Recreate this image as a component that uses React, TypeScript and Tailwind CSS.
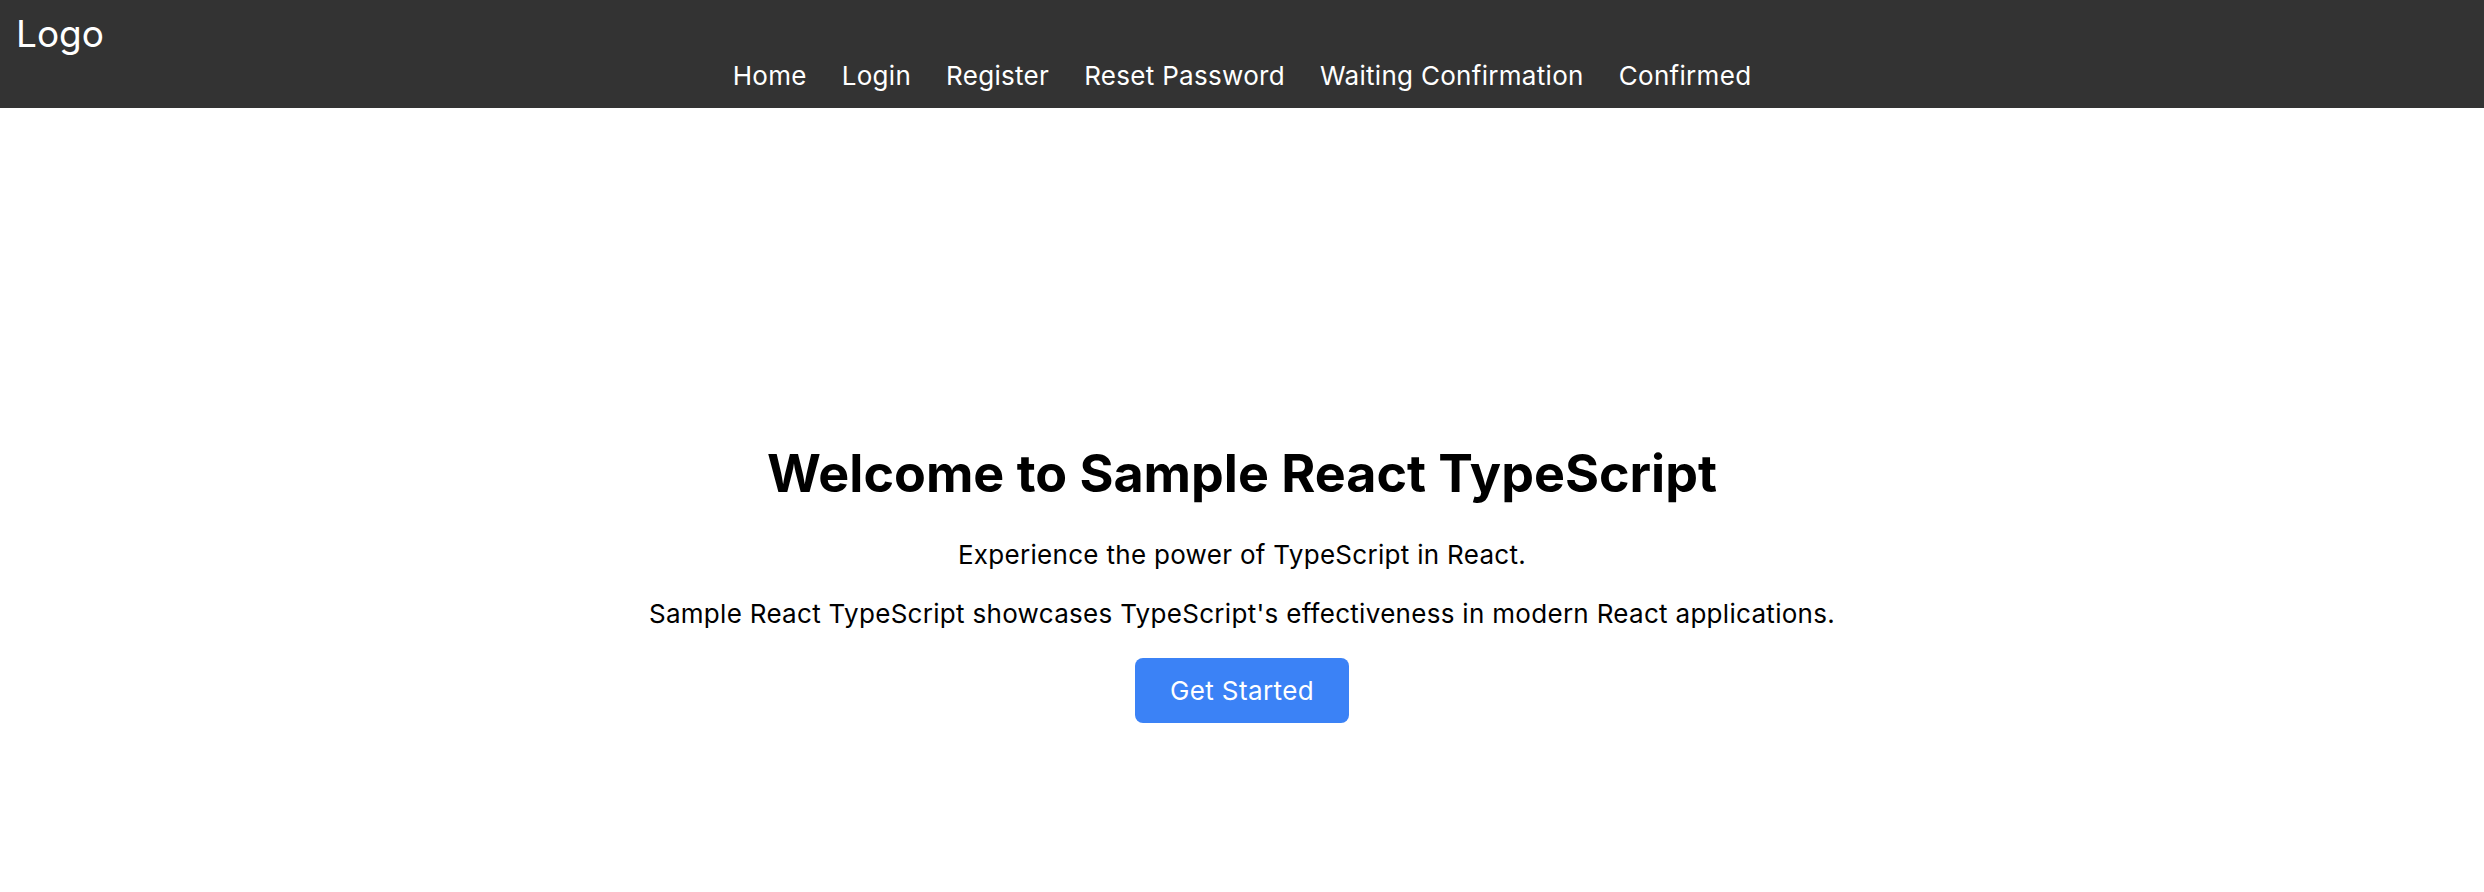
import React from "react";

const links = ["Home", "Login", "Register", "Reset Password", "Waiting Confirmation", "Confirmed"];

function Header() {
  return (
    <header className="bg-[#333333] text-white h-[108px] flex flex-col">
      <div className="px-[16px] pt-[10px] text-[37px] leading-[48px]">Logo</div>
      <nav className="flex justify-center gap-[35px] text-[26px] leading-[36px] tracking-[0.3px]">
        {links.map((l) => (
          <a key={l} href="#" className="text-white">
            {l}
          </a>
        ))}
      </nav>
    </header>
  );
}

export default function App() {
  return (
    <div className="min-h-screen bg-white font-['Inter','Liberation_Sans',sans-serif]">
      <Header />
      <main className="flex flex-col items-center text-center text-black pt-[335px]">
        <h1 className="text-[52px] leading-[61px] font-bold">Welcome to Sample React TypeScript</h1>
        <p className="mt-[32px] text-[26px] leading-[38px] tracking-[0.3px]">Experience the power of TypeScript in React.</p>
        <p className="mt-[21px] text-[26px] leading-[38px] tracking-[0.3px]">
          Sample React TypeScript showcases TypeScript's effectiveness in modern React applications.
        </p>
        <button className="mt-[25px] w-[214px] h-[65px] rounded-[8px] bg-[#3b82f6] text-white text-[26px] tracking-[0.4px]">
          Get Started
        </button>
      </main>
    </div>
  );
}
